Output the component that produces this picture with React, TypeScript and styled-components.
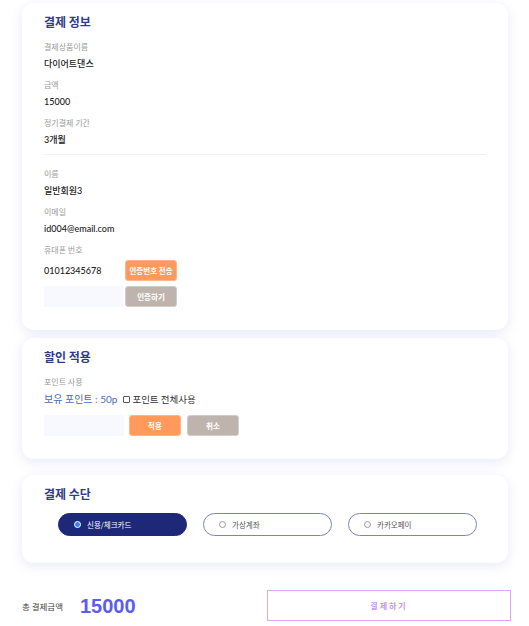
import React, { useState } from "react";
import styled, { createGlobalStyle } from "styled-components";

const Global = createGlobalStyle`
  html, body { margin: 0; padding: 0; background: #ffffff; }
  body { font-family: "Lato", "Noto Sans CJK KR", sans-serif; }
  * { box-sizing: border-box; }
`;

const Page = styled.div`
  width: 529px;
  padding: 3px 21px 0 22px;
  display: flex;
  flex-direction: column;
`;

const Card = styled.section<{ $pt: number; $pb: number; $mt: number }>`
  background: #fff;
  border-radius: 12px;
  box-shadow: 0 3px 12px rgba(110, 120, 200, 0.16);
  padding: ${(p) => p.$pt}px 22px ${(p) => p.$pb}px 22px;
  margin-top: ${(p) => p.$mt}px;
  display: flex;
  flex-direction: column;
`;

const Title = styled.h2`
  margin: 0 0 10px;
  height: 18px;
  font-size: 12px;
  line-height: 18px;
  font-weight: 700;
  color: #2f3d8c;
  font-family: "Noto Sans CJK KR", sans-serif;
`;

const Field = styled.div<{ $mb?: number }>`
  display: flex;
  flex-direction: column;
  margin-bottom: ${(p) => p.$mb ?? 8}px;
`;

const Label = styled.div`
  height: 12px;
  font-size: 8px;
  line-height: 12px;
  color: #9a9a9a;
  margin-bottom: 4px;
  font-family: "Noto Sans CJK KR", sans-serif;
`;

const Value = styled.div`
  height: 14px;
  font-size: 9px;
  line-height: 14px;
  color: #222;
  font-weight: 500;
`;

const Divider = styled.hr`
  border: none;
  height: 1px;
  background: #f0f0f8;
  margin: -1px 0 13px;
`;

const Row = styled.div<{ $mt?: number }>`
  display: flex;
  align-items: center;
  margin-top: ${(p) => p.$mt ?? 0}px;
`;

const Phone = styled.div`
  width: 81px;
  font-size: 9px;
  color: #222;
  font-weight: 500;
`;

const Input = styled.input<{ $w: number }>`
  width: ${(p) => p.$w}px;
  height: 21px;
  border: none;
  background: #f8f8ff;
  margin-right: 2px;
  outline: none;
`;

const Btn = styled.button<{ $variant: "orange" | "gray"; $w: number; $ml?: number }>`
  width: ${(p) => p.$w}px;
  height: 21px;
  margin-left: ${(p) => p.$ml ?? 0}px;
  border-radius: 3px;
  border: 1px solid ${(p) => (p.$variant === "orange" ? "#ffb48a" : "#d4ccc7")};
  background: ${(p) => (p.$variant === "orange" ? "#ff9a5c" : "#bfb4ad")};
  color: #fff;
  font-size: 7.5px;
  font-weight: 700;
  font-family: "Noto Sans CJK KR", sans-serif;
  padding: 0;
  cursor: pointer;
`;

const Points = styled.div`
  height: 14px;
  font-size: 10px;
  line-height: 14px;
  color: #4a6cb8;
  font-family: "Lato", "Noto Sans CJK KR", sans-serif;
`;

const CheckLabel = styled.label`
  display: flex;
  align-items: center;
  height: 14px;
  margin-left: 6px;
  font-size: 9.5px;
  color: #333;
  font-family: "Noto Sans CJK KR", sans-serif;
`;

const Box = styled.span`
  width: 7px;
  height: 7px;
  border: 1px solid #555;
  border-radius: 1px;
  margin-right: 2px;
`;

const Pills = styled.div`
  display: flex;
  gap: 16px;
  padding-left: 14px;
`;

const Pill = styled.div<{ $active: boolean }>`
  width: 129px;
  height: 23px;
  border-radius: 12px;
  border: 1px solid ${(p) => (p.$active ? "#1e2878" : "#7d83c0")};
  background: ${(p) => (p.$active ? "#1e2878" : "#fff")};
  color: ${(p) => (p.$active ? "#fff" : "#555")};
  display: flex;
  align-items: center;
  padding-left: 15px;
  font-size: 7.5px;
  font-family: "Noto Sans CJK KR", sans-serif;
  cursor: pointer;
`;

const Dot = styled.span<{ $active: boolean }>`
  width: 7px;
  height: 7px;
  border-radius: 50%;
  margin-right: 6px;
  border: ${(p) => (p.$active ? "1.5px solid #fff" : "1px solid #999")};
  background: ${(p) => (p.$active ? "#3b7cf5" : "#fff")};
`;

const Bottom = styled.div`
  display: grid;
  grid-template-columns: 245px 244px;
  align-items: center;
  margin-top: 27px;
`;

const Total = styled.div`
  display: flex;
  align-items: center;
`;

const TotalLabel = styled.span`
  font-size: 8.5px;
  color: #444;
  width: 58px;
  font-family: "Noto Sans CJK KR", sans-serif;
`;

const TotalValue = styled.span`
  font-size: 20px;
  line-height: 24px;
  font-weight: 700;
  color: #5a5cf3;
  font-family: "Liberation Sans", sans-serif;
`;

const PayBtn = styled.button`
  height: 31px;
  border: 1px solid #dca8ff;
  background: #fff;
  color: #c597f2;
  font-size: 8px;
  letter-spacing: 2px;
  font-weight: 700;
  font-family: "Noto Sans CJK KR", sans-serif;
  cursor: pointer;
`;

const methods = ["신용/체크카드", "가상계좌", "카카오페이"];

export default function App() {
  const [method, setMethod] = useState(0);
  return (
    <Page>
      <Global />
      <Card $pt={10} $pb={23} $mt={0}>
        <Title>결제 정보</Title>
        <Field>
          <Label>결제상품이름</Label>
          <Value>다이어트댄스</Value>
        </Field>
        <Field>
          <Label>금액</Label>
          <Value>15000</Value>
        </Field>
        <Field>
          <Label>정기결제 기간</Label>
          <Value>3개월</Value>
        </Field>
        <Divider />
        <Field>
          <Label>이름</Label>
          <Value>일반회원3</Value>
        </Field>
        <Field>
          <Label>이메일</Label>
          <Value>id004@email.com</Value>
        </Field>
        <Field $mb={0}>
          <Label>휴대폰 번호</Label>
          <Row>
            <Phone>01012345678</Phone>
            <Btn $variant="orange" $w={52}>인증번호 전송</Btn>
          </Row>
          <Row $mt={5}>
            <Input $w={79} />
            <Btn $variant="gray" $w={52}>인증하기</Btn>
          </Row>
        </Field>
      </Card>

      <Card $pt={10} $pb={23} $mt={8}>
        <Title>할인 적용</Title>
        <Label>포인트 사용</Label>
        <Row>
          <Points>보유 포인트 : 50p</Points>
          <CheckLabel>
            <Box />
            포인트 전체사용
          </CheckLabel>
        </Row>
        <Row $mt={9}>
          <Input $w={80} />
          <Btn $variant="orange" $w={52} $ml={3}>적용</Btn>
          <Btn $variant="gray" $w={52} $ml={6}>취소</Btn>
        </Row>
      </Card>

      <Card $pt={10} $pb={27} $mt={16}>
        <Title>결제 수단</Title>
        <Pills>
          {methods.map((m, i) => (
            <Pill key={m} $active={method === i} onClick={() => setMethod(i)}>
              <Dot $active={method === i} />
              {m}
            </Pill>
          ))}
        </Pills>
      </Card>

      <Bottom>
        <Total>
          <TotalLabel>총 결제금액</TotalLabel>
          <TotalValue>15000</TotalValue>
        </Total>
        <PayBtn>결제하기</PayBtn>
      </Bottom>
    </Page>
  );
}
